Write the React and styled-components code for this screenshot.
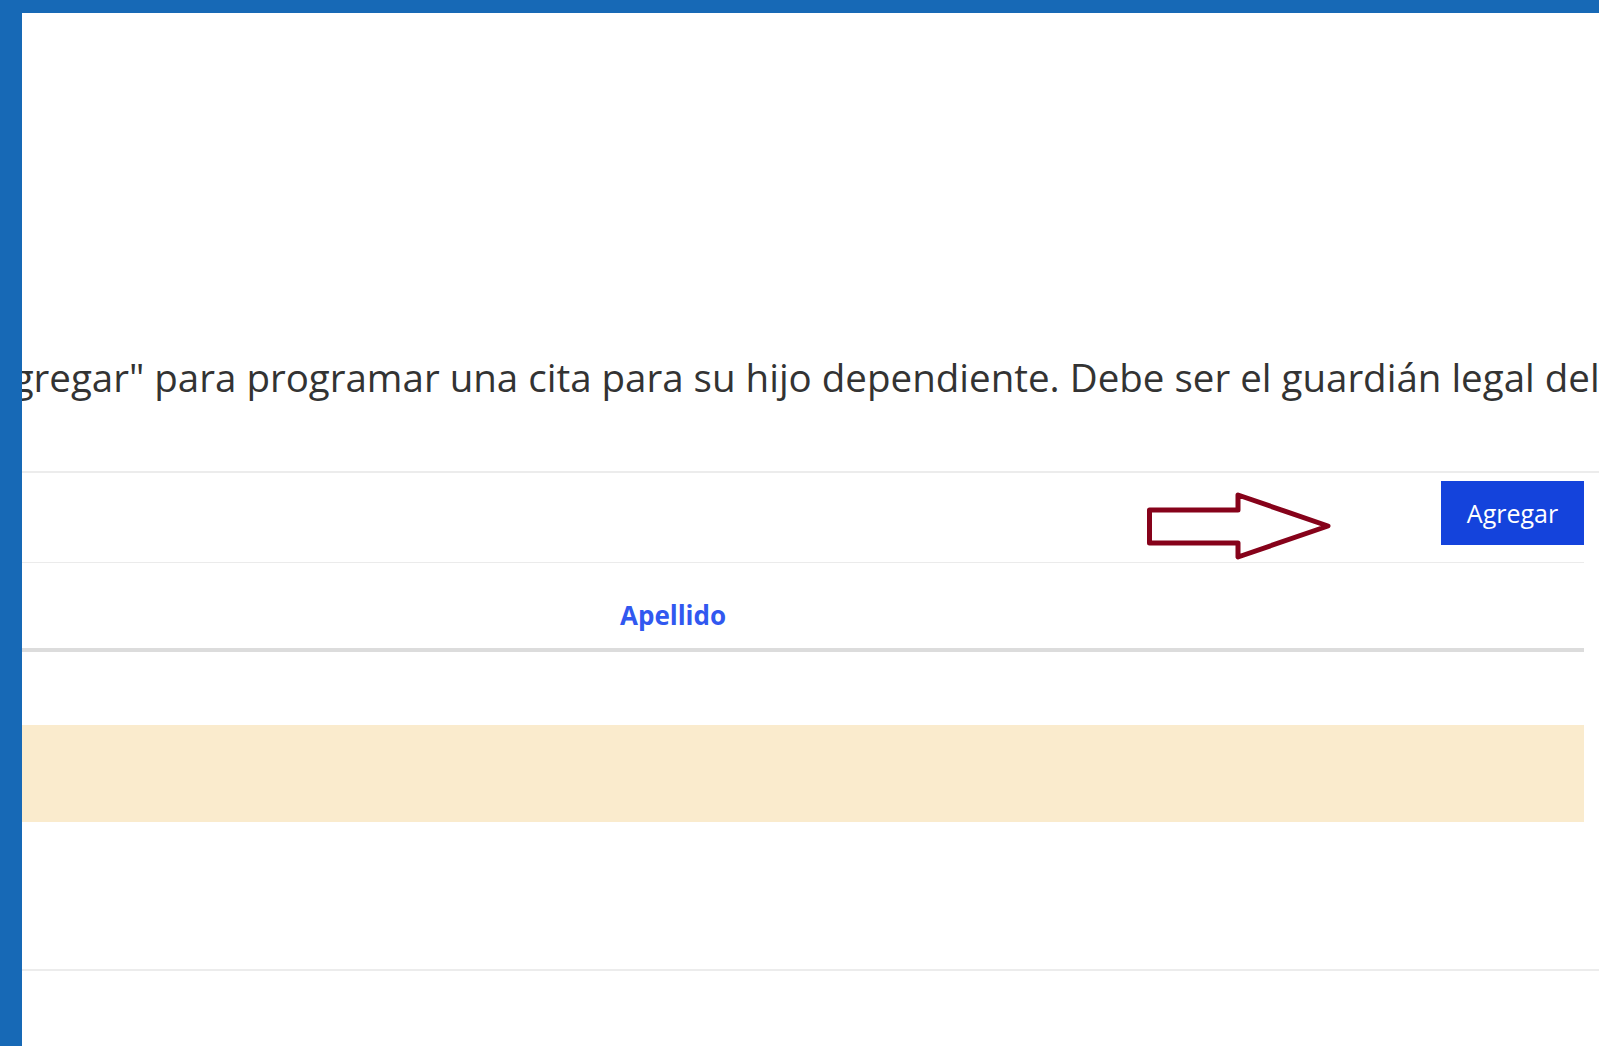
import React from "react";
import styled, { createGlobalStyle } from "styled-components";

const GlobalStyle = createGlobalStyle`
  html, body {
    margin: 0;
    padding: 0;
    background: #ffffff;
  }
  body {
    font-family: "Open Sans", "Noto Sans", sans-serif;
    color: #333333;
  }
`;

const Frame = styled.div`
  display: flex;
  flex-direction: column;
  width: 100%;
  height: 1046px;
  overflow: hidden;
`;

const TopBar = styled.div`
  height: 13px;
  background: #1769b6;
  flex-shrink: 0;
`;

const Body = styled.div`
  display: flex;
  flex: 1;
  min-height: 0;
`;

const SideBar = styled.div`
  width: 22px;
  background: #1769b6;
  flex-shrink: 0;
`;

const Main = styled.main`
  flex: 1;
  min-width: 0;
  overflow: hidden;
  display: flex;
  flex-direction: column;
`;

const Intro = styled.section`
  padding: 340px 0 70px;
  border-bottom: 2px solid #ececec;
  overflow: hidden;
`;

const IntroText = styled.p`
  margin: 0 0 0 ${(p) => p.$shift}px;
  font-size: 38.5px;
  line-height: 48px;
  white-space: nowrap;
  color: #333333;
  letter-spacing: ${(p) => p.$tracking}px;
`;

const TableArea = styled.section`
  padding: 0 15px 147px 0;
`;

const Toolbar = styled.div`
  height: 90px;
  padding-top: 8px;
  box-sizing: border-box;
  display: flex;
  justify-content: flex-end;
  align-items: flex-start;
  border-bottom: 1px solid #ebebeb;
`;

const Pointer = styled.svg`
  margin: 7px 105px 0 0;
  flex-shrink: 0;
`;

const AddButton = styled.button`
  width: 143px;
  height: 64px;
  border: none;
  border-radius: 0;
  background: #1443dc;
  color: #ffffff;
  font-family: "Open Sans", "Noto Sans", sans-serif;
  font-size: 25px;
  padding: 0;
  cursor: pointer;
`;

const HeaderRow = styled.div`
  display: grid;
  grid-template-columns: 598px 1fr;
  height: 51px;
  padding-top: 34px;
  border-bottom: 4px solid #dcdcdc;
`;

const HeaderCell = styled.div`
  font-size: 26px;
  line-height: 36px;
  font-weight: 700;
  color: #3158f0;
`;

const Row = styled.div`
  height: ${(p) => p.$height}px;
  background: ${(p) => (p.$highlight ? "#faebcd" : "#ffffff")};
`;

const Footer = styled.div`
  flex: 1;
  border-top: 2px solid #ececec;
`;

function ArrowMark() {
  return (
    <Pointer width="192" height="76" viewBox="0 0 192 76">
      <polygon
        points="5.5,22 94,22 94,7 184,38 94,69 94,55 5.5,55"
        fill="none"
        stroke="#86021a"
        strokeWidth="5"
        strokeLinejoin="round"
      />
    </Pointer>
  );
}

export default function App() {
  return (
    <>
      <GlobalStyle />
      <Frame>
        <TopBar />
        <Body>
          <SideBar />
          <Main>
            <Intro>
              <IntroText $shift={-49} $tracking={0}>
                "Agregar" para programar una cita para su hijo dependiente. Debe ser el guardián legal del
              </IntroText>
            </Intro>
            <TableArea>
              <Toolbar>
                <ArrowMark />
                <AddButton type="button">Agregar</AddButton>
              </Toolbar>
              <HeaderRow>
                <div />
                <HeaderCell>Apellido</HeaderCell>
              </HeaderRow>
              <Row $height={73} />
              <Row $height={97} $highlight />
            </TableArea>
            <Footer />
          </Main>
        </Body>
      </Frame>
    </>
  );
}
